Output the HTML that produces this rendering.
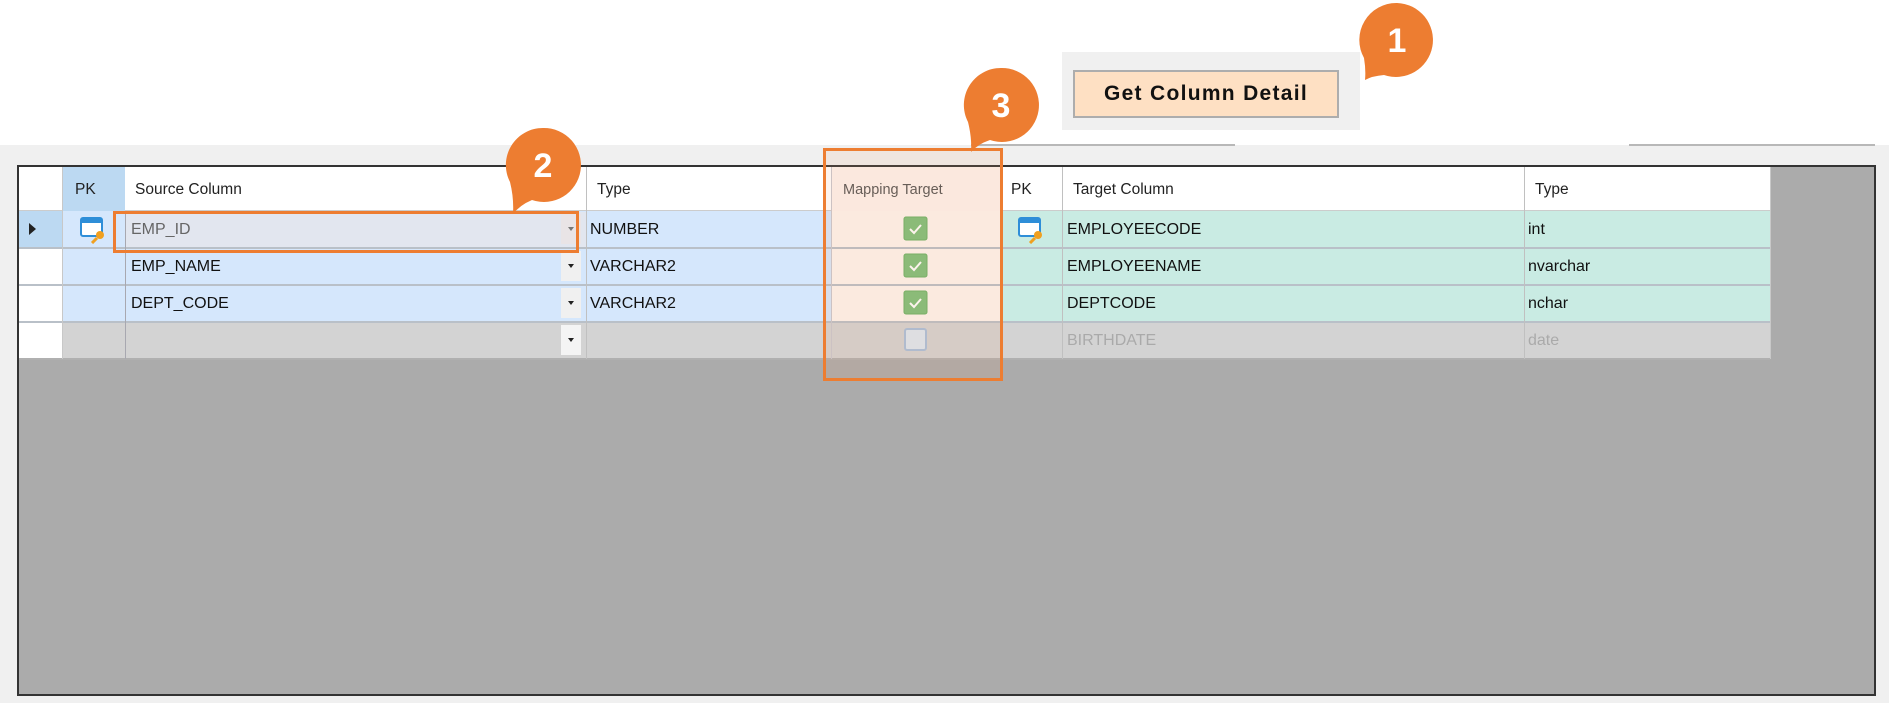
<!DOCTYPE html>
<html><head><meta charset="utf-8"><style>
*{margin:0;padding:0;box-sizing:border-box}
body{width:1889px;height:703px;position:relative;background:#fff;font-family:"Liberation Sans","Noto Sans CJK JP",sans-serif;overflow:hidden}
.a{position:absolute}
.cell{position:absolute;font-size:16px;color:#111;line-height:37px;padding-left:5px;white-space:nowrap;overflow:hidden}
.hdr{font-size:15.5px;line-height:46px;color:#222}
</style></head><body>
<div class="a" style="left:0;top:145px;width:1889px;height:558px;background:#f0f0f0"></div>
<div class="a" style="left:971px;top:144px;width:264px;height:2px;background:#b8b8b8"></div>
<div class="a" style="left:1629px;top:144px;width:246px;height:2px;background:#b8b8b8"></div>
<div class="a" style="left:1062px;top:52px;width:298px;height:78px;background:#f0f0f0"></div>
<div class="a" style="left:1073px;top:70px;width:266px;height:48px;background:#fee0c3;border:2px solid #adadad;text-align:center;font-weight:bold;font-size:21px;line-height:44px;color:#111;letter-spacing:1.3px">Get Column Detail</div>

<div class="a" style="left:17px;top:165px;width:1859px;height:531px;background:#ababab;border:2px solid #333"></div>
<div class="a" style="left:19px;top:167px;width:1751px;height:44px;background:#fff;border-bottom:1px solid #ccc"></div>
<div class="a" style="left:63px;top:167px;width:62px;height:44px;background:#bcd9f2"></div>
<div class="a" style="left:832px;top:167px;width:168px;height:44px;background:#fdf3ee"></div>
<div class="cell hdr" style="left:70px;top:167px">PK</div>
<div class="cell hdr" style="left:130px;top:167px">Source Column</div>
<div class="cell hdr" style="left:592px;top:167px">Type</div>
<div class="cell hdr" style="left:838px;top:167px;font-size:14.5px;color:#555">Mapping Target</div>
<div class="cell hdr" style="left:1006px;top:167px">PK</div>
<div class="cell hdr" style="left:1068px;top:167px">Target Column</div>
<div class="cell hdr" style="left:1530px;top:167px">Type</div>

<div class="a" style="left:19px;top:211px;width:1751px;height:148px;background:#fff"></div>
<div class="a" style="left:19px;top:211px;width:44px;height:37px;background:#bcd9f2"></div>
<div class="a" style="left:29px;top:223px;width:0;height:0;border-left:7px solid #222;border-top:6px solid transparent;border-bottom:6px solid transparent"></div>
<div class="a" style="left:63px;top:211px;width:769px;height:111px;background:#d5e7fc"></div>
<div class="a" style="left:125px;top:212px;width:462px;height:35px;background:#e2e6ef"></div>
<div class="a" style="left:832px;top:211px;width:168px;height:111px;background:#fdf5f0"></div>
<div class="a" style="left:1000px;top:211px;width:770px;height:111px;background:#c9ebe3"></div>
<div class="a" style="left:63px;top:322px;width:1707px;height:37px;background:#d3d3d3"></div>
<div class="a" style="left:19px;top:247px;width:1751px;height:2px;background:#b9c0c8"></div>
<div class="a" style="left:19px;top:284px;width:1751px;height:2px;background:#b9c0c8"></div>
<div class="a" style="left:19px;top:321px;width:1751px;height:2px;background:#b9c0c8"></div>
<div class="a" style="left:19px;top:358px;width:1751px;height:2px;background:#b0b0b0"></div>
<div class="a" style="left:62px;top:167px;width:1px;height:192px;background:#c8c8c8"></div>
<div class="a" style="left:125px;top:211px;width:1px;height:148px;background:#a8a8b0"></div>
<div class="a" style="left:586px;top:167px;width:1px;height:192px;background:#c0c0c0"></div>
<div class="a" style="left:831px;top:167px;width:1px;height:192px;background:#c8c8d0"></div>
<div class="a" style="left:1062px;top:167px;width:1px;height:192px;background:#c0c0c0"></div>
<div class="a" style="left:1524px;top:167px;width:1px;height:192px;background:#c0c0c0"></div>
<div class="a" style="left:1770px;top:167px;width:1px;height:192px;background:#c8c8c8"></div>
<div class="a" style="left:561px;top:214px;width:20px;height:30px;background:#e9e4e6"></div>
<div class="a" style="left:561px;top:251px;width:20px;height:30px;background:#f0f0f0"></div>
<div class="a" style="left:561px;top:288px;width:20px;height:30px;background:#f0f0f0"></div>
<div class="a" style="left:561px;top:325px;width:20px;height:30px;background:#f4f4f4"></div>
<div class="a" style="left:568px;top:227px;border-top:4px solid #777;border-left:3px solid transparent;border-right:3px solid transparent"></div>
<div class="a" style="left:568px;top:264px;border-top:4px solid #222;border-left:3px solid transparent;border-right:3px solid transparent"></div>
<div class="a" style="left:568px;top:301px;border-top:4px solid #222;border-left:3px solid transparent;border-right:3px solid transparent"></div>
<div class="a" style="left:568px;top:338px;border-top:4px solid #222;border-left:3px solid transparent;border-right:3px solid transparent"></div>
<svg class="a" style="left:80px;top:216px" width="28" height="28" viewBox="0 0 28 28"><rect x="1" y="2" width="21" height="18" rx="2" fill="#fff" stroke="#2e8ed8" stroke-width="2"/><rect x="1" y="2" width="21" height="5" fill="#2e8ed8"/><circle cx="20" cy="19" r="4" fill="#f0a020"/><path d="M17 22 L12 27" stroke="#f0a020" stroke-width="3"/></svg>
<svg class="a" style="left:1018px;top:216px" width="28" height="28" viewBox="0 0 28 28"><rect x="1" y="2" width="21" height="18" rx="2" fill="#fff" stroke="#2e8ed8" stroke-width="2"/><rect x="1" y="2" width="21" height="5" fill="#2e8ed8"/><circle cx="20" cy="19" r="4" fill="#f0a020"/><path d="M17 22 L12 27" stroke="#f0a020" stroke-width="3"/></svg>
<svg class="a" style="left:903px;top:216px" width="26" height="26"><rect x="1" y="1" width="23" height="23" rx="2" fill="#7ec07a" stroke="#6ab266"/><path d="M7 13 L11 17 L18 9" stroke="#fff" stroke-width="2" fill="none"/></svg>
<svg class="a" style="left:903px;top:253px" width="26" height="26"><rect x="1" y="1" width="23" height="23" rx="2" fill="#7ec07a" stroke="#6ab266"/><path d="M7 13 L11 17 L18 9" stroke="#fff" stroke-width="2" fill="none"/></svg>
<svg class="a" style="left:903px;top:290px" width="26" height="26"><rect x="1" y="1" width="23" height="23" rx="2" fill="#7ec07a" stroke="#6ab266"/><path d="M7 13 L11 17 L18 9" stroke="#fff" stroke-width="2" fill="none"/></svg>
<svg class="a" style="left:903px;top:327px" width="26" height="26"><rect x="2" y="2" width="21" height="21" rx="2" fill="#dce8f2" stroke="#a8c0dc" stroke-width="2"/></svg>
<div class="cell" style="left:126px;top:211px;color:#666">EMP_ID</div>
<div class="cell" style="left:126px;top:248px">EMP_NAME</div>
<div class="cell" style="left:126px;top:285px">DEPT_CODE</div>
<div class="cell" style="left:585px;top:211px">NUMBER</div>
<div class="cell" style="left:585px;top:248px">VARCHAR2</div>
<div class="cell" style="left:585px;top:285px">VARCHAR2</div>
<div class="cell" style="left:1062px;top:211px">EMPLOYEECODE</div>
<div class="cell" style="left:1062px;top:248px">EMPLOYEENAME</div>
<div class="cell" style="left:1062px;top:285px">DEPTCODE</div>
<div class="cell" style="left:1062px;top:322px;color:#aaa">BIRTHDATE</div>
<div class="cell" style="left:1523px;top:211px">int</div>
<div class="cell" style="left:1523px;top:248px">nvarchar</div>
<div class="cell" style="left:1523px;top:285px">nchar</div>
<div class="cell" style="left:1523px;top:322px;color:#aaa">date</div>

<div class="a" style="left:113px;top:211px;width:466px;height:42px;border:3px solid #ed7d31"></div>
<div class="a" style="left:823px;top:148px;width:180px;height:233px;border:3px solid #ed7d31;background:rgba(240,160,110,0.12)"></div>

<svg class="a" style="left:0;top:0" width="1889" height="703">
<g fill="#ed7d31">
<path d="M1397 3 A37 37 0 1 1 1384 75 Q1372 76 1365 80 Q1366 70 1364 58 A37 37 0 0 1 1397 3 Z"/>
<path d="M1001 68 A37 37 0 1 1 990 140 Q978 144 971 152 Q972 138 968 122 A37 37 0 0 1 1001 68 Z"/>
<path d="M543 128 A37 37 0 1 1 532 200 Q520 205 513 214 Q514 198 510 182 A37 37 0 0 1 543 128 Z"/>
</g>
<g fill="#fff" font-family="Liberation Sans, sans-serif" font-weight="bold" font-size="34" text-anchor="middle">
<text x="1397" y="52">1</text><text x="1001" y="117">3</text><text x="543" y="177">2</text>
</g>
</svg>
</body></html>
